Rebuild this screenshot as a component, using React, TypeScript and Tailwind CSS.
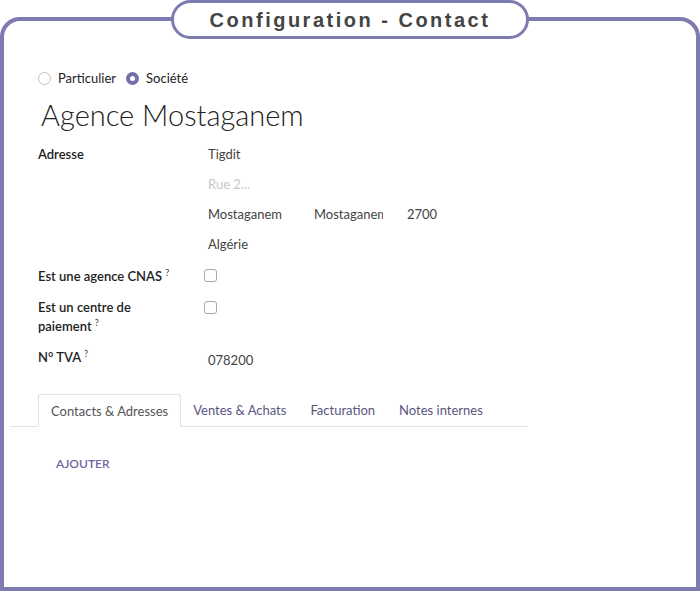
const accent = "#7d7bb0";

function Radio({ checked, label }: { checked?: boolean; label: string }) {
  return (
    <label className="flex items-center gap-[7px]">
      {checked ? (
        <span className="flex h-[13px] w-[13px] items-center justify-center rounded-full bg-[#7470a8]">
          <span className="h-[5px] w-[5px] rounded-full bg-white" />
        </span>
      ) : (
        <span className="h-[13px] w-[13px] rounded-full border border-[#bfbfbf] bg-white" />
      )}
      <span className="text-[13px] text-[#222]">{label}</span>
    </label>
  );
}

function Checkbox() {
  return <span className="mt-[3px] block h-[13px] w-[13px] rounded-[3px] border border-[#a9a9a9] bg-white" />;
}

function Help() {
  return <sup className="ml-[3px] text-[9px] text-[#555]">?</sup>;
}

const tabs = ["Contacts & Adresses", "Ventes & Achats", "Facturation", "Notes internes"];

export default function App() {
  return (
    <div
      className="relative h-[591px] w-[700px] overflow-hidden bg-white"
      style={{ fontFamily: "Lato, 'Open Sans', sans-serif" }}
    >
      <div className="mt-[17px] h-[574px] rounded-t-[20px] border-4 border-[#7d7bb0] bg-white">
        <div className="pl-[34px] pt-[48px]">
          <div className="flex items-center gap-[10px]">
            <Radio label="Particulier" />
            <Radio checked label="Société" />
          </div>
          <h1 className="mt-[6px] pl-[3px] text-[29px] leading-[40px] font-light text-[#222]">
            Agence Mostaganem
          </h1>
        </div>

        <div className="mt-[9px] pl-[34px] text-[13px] leading-[20px]">
          <div className="flex">
            <div className="w-[170px] font-semibold text-[#222]">Adresse</div>
            <div className="text-[#444]">
              <div className="h-[30px]">Tigdit</div>
              <div className="h-[30px] text-[#c8c8c8]">Rue 2...</div>
              <div className="flex h-[30px]">
                <span className="w-[106px]">Mostaganem</span>
                <span className="w-[93px]">
                  <span className="block w-[69px] overflow-hidden whitespace-nowrap">Mostaganem</span>
                </span>
                <span>2700</span>
              </div>
              <div className="h-[30px]">Algérie</div>
            </div>
          </div>

          <div className="mt-[2px] flex h-[32px]">
            <div className="w-[166px] font-semibold text-[#222]">
              Est une agence CNAS
              <Help />
            </div>
            <Checkbox />
          </div>

          <div className="flex h-[49px]">
            <div className="w-[166px] leading-[19px] font-semibold text-[#222]">
              Est un centre de
              <br />
              paiement
              <Help />
            </div>
            <Checkbox />
          </div>

          <div className="flex h-[47px]">
            <div className="w-[170px] font-semibold text-[#222]">
              N° TVA
              <Help />
            </div>
            <div className="pt-[3px] text-[#444]">078200</div>
          </div>
        </div>

        <div className="ml-[6px] flex w-[518px] border-b border-[#dee2e6] pl-[28px] text-[13px]">
          {tabs.map((t, i) =>
            i === 0 ? (
              <div
                key={t}
                className="-mb-px flex h-[33px] items-center rounded-t-[3px] border border-b-white border-[#dee2e6] bg-white px-[12px] pt-[3px] text-[#555]"
              >
                {t}
              </div>
            ) : (
              <div key={t} className="flex h-[32px] items-center px-[12px] pt-[3px] text-[#5a5680]">
                {t}
              </div>
            )
          )}
        </div>

        <div className="pl-[52px] pt-[23px]">
          <button className="text-[12px] font-semibold text-[#6d68a3]">AJOUTER</button>
        </div>
      </div>

      <div
        className="absolute left-[171px] top-0 flex h-[39px] w-[358px] items-center justify-center rounded-full border-[3px] bg-white"
        style={{ borderColor: accent }}
      >
        <span
          className="text-[20px] font-bold tracking-[2.5px] text-[#444]"
          style={{ fontFamily: "'Liberation Sans', Arial, sans-serif" }}
        >
          Configuration - Contact
        </span>
      </div>
    </div>
  );
}
